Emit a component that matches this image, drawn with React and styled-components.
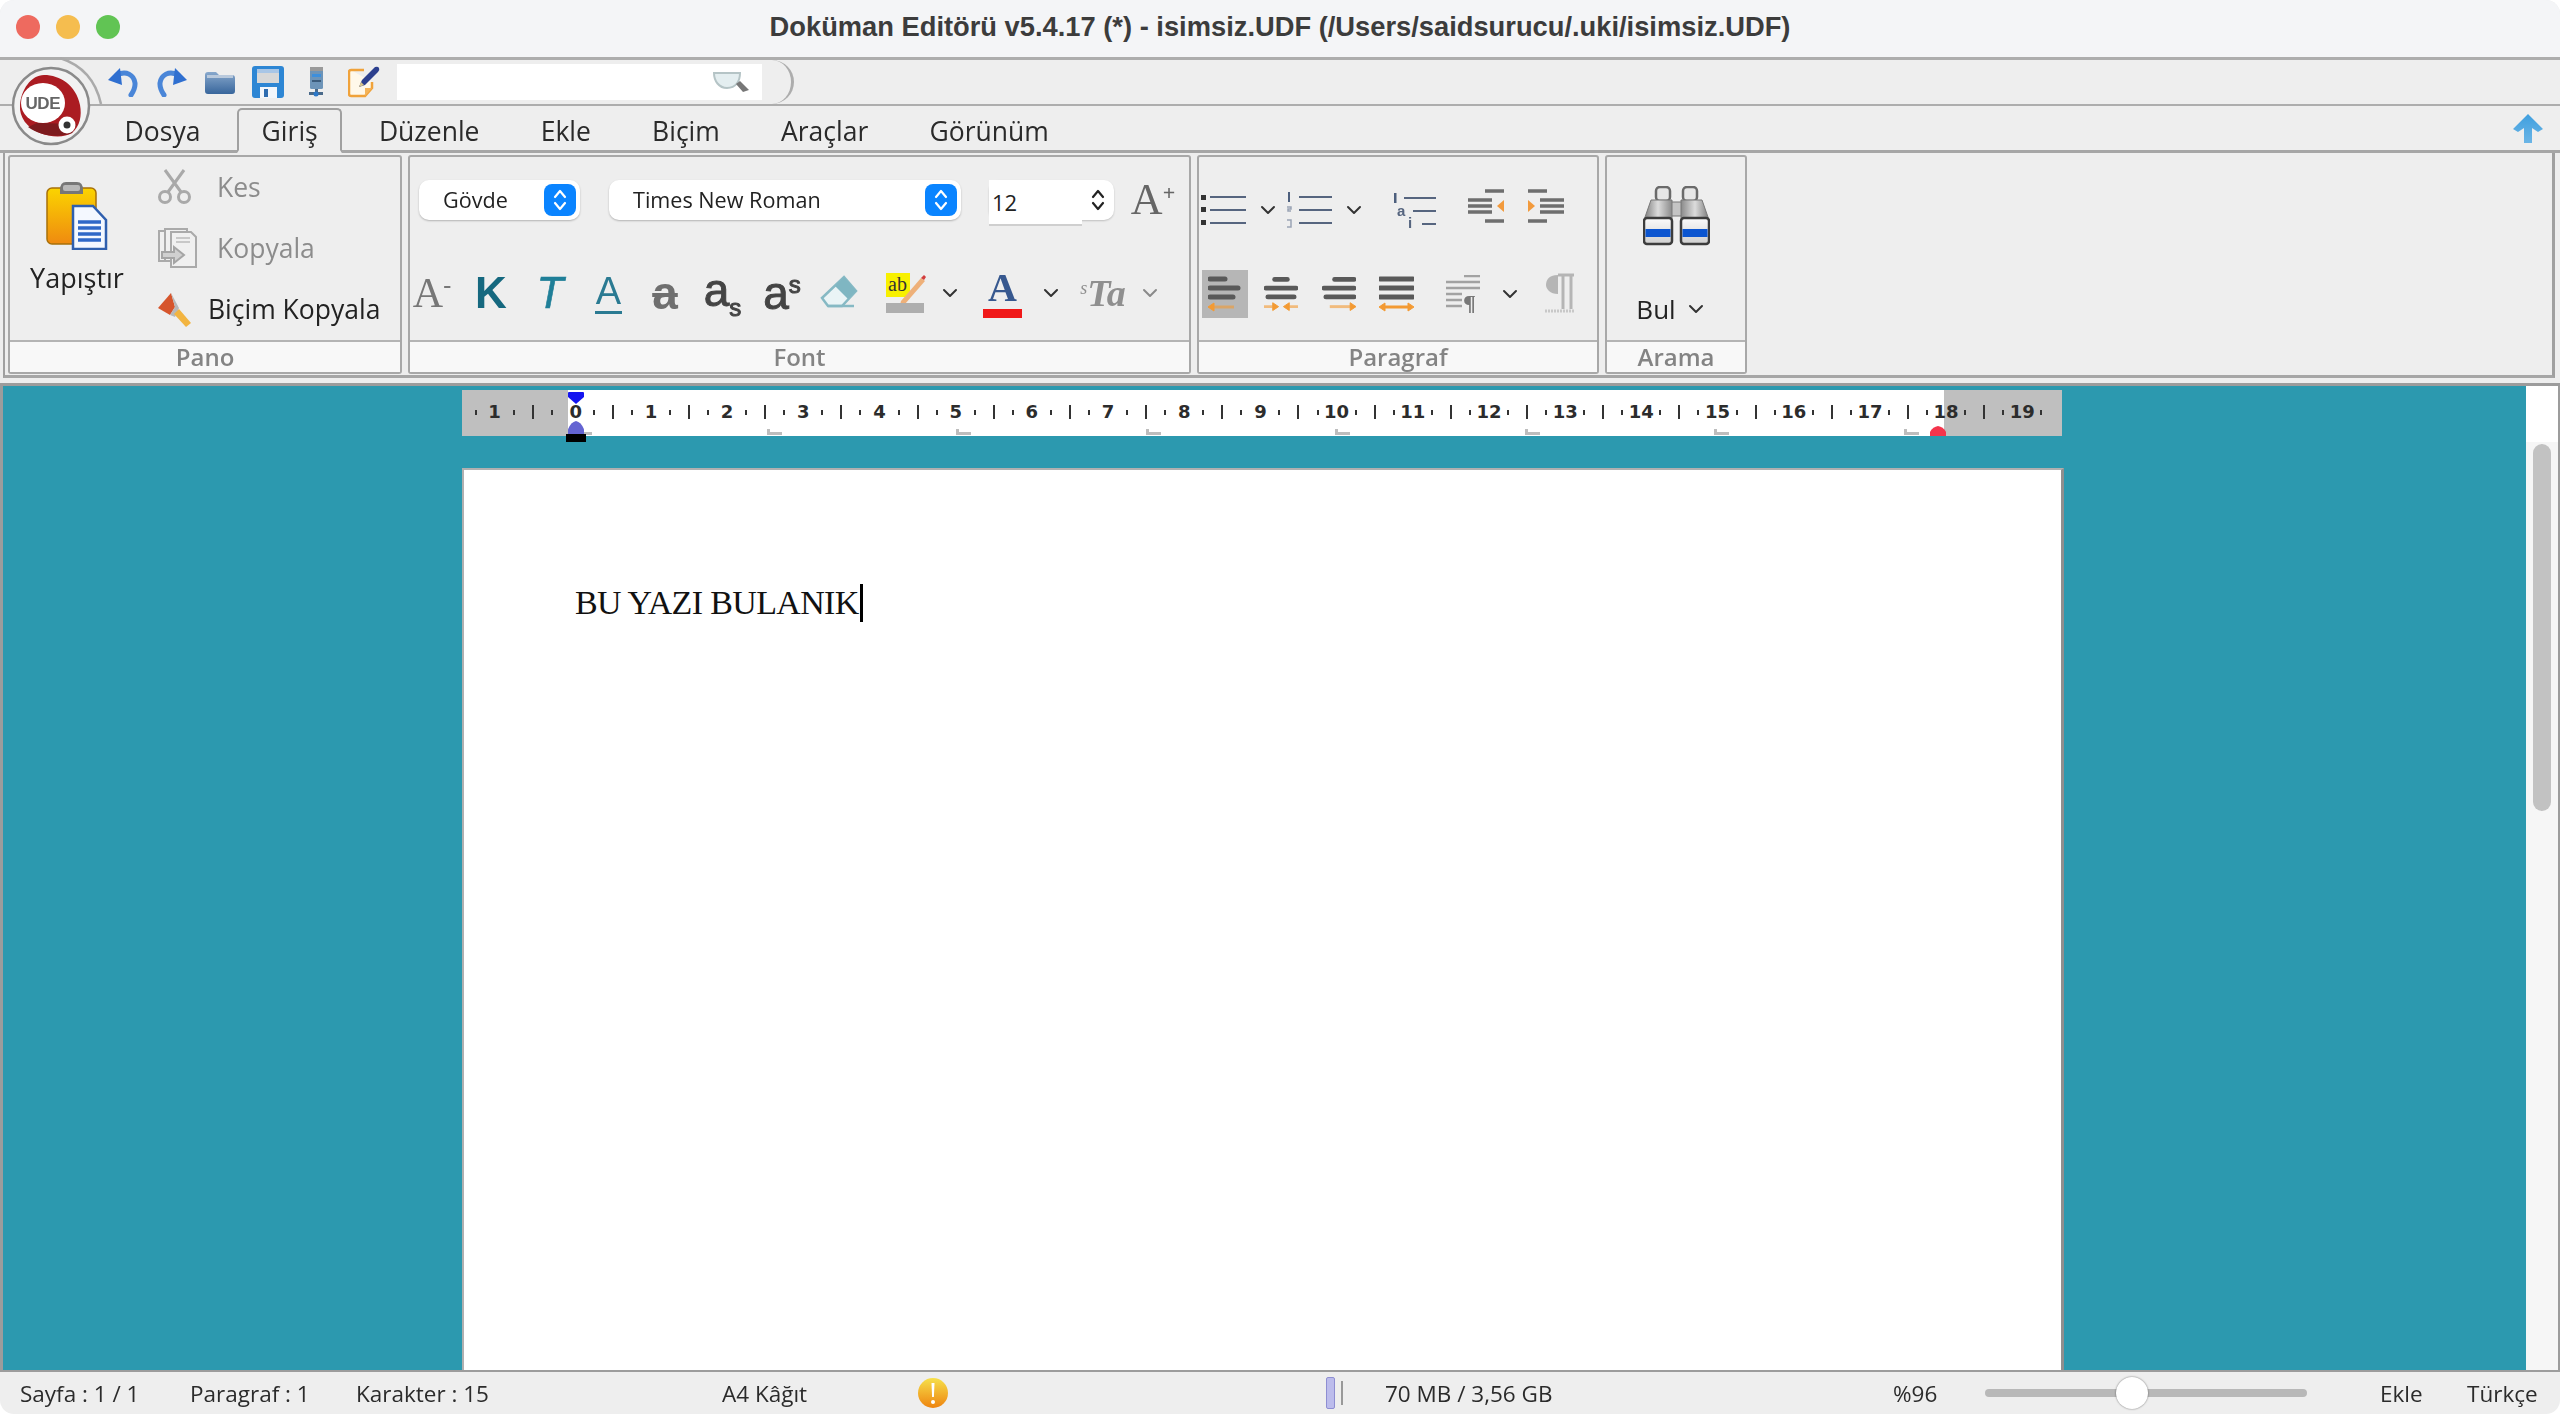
import React from 'react';
import styled, { createGlobalStyle } from 'styled-components';

const UI_FONT = '"Open Sans", "Liberation Sans", sans-serif';

const GlobalStyle = createGlobalStyle`
  html, body { margin: 0; padding: 0; background: #fff; }
  * { box-sizing: border-box; }
`;

/* ---------- icons ---------- */

const Chevron = ({ color = '#333' }) => (
  <svg width="16" height="10" viewBox="0 0 16 10">
    <path d="M2 2l6 6 6-6" fill="none" stroke={color} strokeWidth="2" strokeLinecap="round" strokeLinejoin="round" />
  </svg>
);

const UpDown = ({ color = '#fff', size = 24 }) => (
  <svg width="14" height={size} viewBox="0 0 14 24">
    <path d="M2 9l5-6 5 6M2 15l5 6 5-6" fill="none" stroke={color} strokeWidth="2.2" strokeLinecap="round" strokeLinejoin="round" />
  </svg>
);

const Logo = () => (
  <svg width="112" height="96" viewBox="0 0 112 96">
    <path d="M60 1C82 8 96 24 101 47" fill="none" stroke="#aaa" strokeWidth="2.5" />
    <circle cx="51" cy="49" r="38" fill="#f2f2f2" stroke="#8a8a8a" strokeWidth="2.5" />
    <path d="M44 18c16 0 32 10 36 30 2 11 0 21-8 28-8 5-22 4-32 0-13-5-21-16-20-28 1-15 11-30 24-30z" fill="#ab1c22" />
    <path d="M28 70c12 9 30 11 44 6l5-9-40-1z" fill="#7d1b1e" />
    <ellipse cx="43" cy="46" rx="22" ry="20" fill="#fff" />
    <text x="43" y="52" fontFamily='"Liberation Sans", sans-serif' fontSize="17" fontWeight="700" fill="#666" textAnchor="middle" textLength="35">UDE</text>
    <circle cx="67" cy="68" r="8.5" fill="#fff" />
    <circle cx="67" cy="68" r="3.5" fill="#333" />
  </svg>
);

const UndoIcon = ({ flip }) => (
  <svg width="30" height="30" viewBox="0 0 30 30" style={flip ? { transform: 'scaleX(-1)' } : undefined}>
    <path d="M9 8c9-5 17 0 18 8 .4 5-2 9-4 12" fill="none" stroke="#4a86d8" strokeWidth="5" strokeLinecap="round" />
    <path d="M0 13L12 1l2 17z" fill="#2f6fd0" />
  </svg>
);

const FolderIcon = () => (
  <svg width="32" height="26" viewBox="0 0 32 26">
    <defs>
      <linearGradient id="fold" x1="0" y1="0" x2="0" y2="1">
        <stop offset="0" stopColor="#88a8cc" />
        <stop offset="1" stopColor="#38669c" />
      </linearGradient>
    </defs>
    <path d="M1 6q0-3 3-3h8l3 3h13q3 0 3 3v13q0 3-3 3H4q-3 0-3-3z" fill="url(#fold)" />
    <path d="M3 6h26v3H3z" fill="#b9c9dc" />
  </svg>
);

const SaveIcon = () => (
  <svg width="32" height="32" viewBox="0 0 32 32">
    <rect x="0" y="0" width="32" height="32" rx="3" fill="#2d86d4" />
    <rect x="5" y="3" width="22" height="14" fill="#d8d8d8" />
    <rect x="5" y="3" width="22" height="4" fill="#a9c6e6" />
    <rect x="8" y="21" width="17" height="11" fill="#f2f6fb" />
    <rect x="12" y="23" width="4" height="8" fill="#2d6cb0" />
  </svg>
);

const ServerIcon = () => (
  <svg width="22" height="32" viewBox="0 0 22 32">
    <rect x="5" y="1" width="13" height="22" rx="1.5" fill="#6d94b8" />
    <rect x="5" y="1" width="13" height="4" fill="#9a9a9a" />
    <rect x="7" y="8" width="9" height="3" fill="#3d8fdc" />
    <rect x="7" y="14" width="9" height="2" fill="#3c5c7c" />
    <path d="M10 23h3v3h5v3H4v-3h6z" fill="#4a6a8a" />
    <circle cx="11" cy="28" r="2.5" fill="#2c78c8" />
  </svg>
);

const NoteIcon = () => (
  <svg width="32" height="32" viewBox="0 0 32 32">
    <path d="M3 4h13M3 4q-2 0-2 2v22q0 2 2 2h14l7-8v-6" fill="#fff8ea" stroke="#f0a23a" strokeWidth="2.5" />
    <path d="M17 30v-8h7z" fill="#f4b45a" />
    <path d="M11 21l3-7L27 1q3-1 4 1 1 2-1 4L17 19z" fill="#2c3f8e" />
    <path d="M11 21l2-5 3 3z" fill="#d8c58a" />
  </svg>
);

const SearchGlass = () => (
  <svg width="38" height="22" viewBox="0 0 38 22">
    <path d="M2 2h26c0 8-4 15-13 15C7 17 2 10 2 2z" fill="#e4eef0" stroke="#b5c4c6" strokeWidth="2" />
    <path d="M24 13l7 8 6-2-9-9z" fill="#777" />
  </svg>
);

const CollapseArrow = () => (
  <svg width="30" height="30" viewBox="0 0 30 30">
    <defs>
      <linearGradient id="collapse" x1="0" y1="0" x2="0" y2="1">
        <stop offset="0" stopColor="#3f9fdf" />
        <stop offset="1" stopColor="#6bb5e6" />
      </linearGradient>
    </defs>
    <path d="M15 0L30 15l-5 3-6-4v15h-8V14l-6 4-5-3z" fill="url(#collapse)" />
  </svg>
);

const PasteIcon = () => (
  <svg width="62" height="70" viewBox="0 0 62 70">
    <defs>
      <linearGradient id="board" x1="0" y1="0" x2="0" y2="1">
        <stop offset="0" stopColor="#fbd400" />
        <stop offset="1" stopColor="#ef8a10" />
      </linearGradient>
    </defs>
    <rect x="1" y="8" width="49" height="56" rx="5" fill="url(#board)" stroke="#a87008" strokeWidth="1.5" />
    <path d="M14 10q0-8 6-8h11q6 0 6 8v4H14z" fill="#777" />
    <rect x="17" y="5" width="17" height="6" rx="2" fill="#b8b8b8" />
    <path d="M27 26h20l13 14v29H27z" fill="#f4f8ff" stroke="#2f5fae" strokeWidth="2.5" />
    <path d="M32 42h23M32 48h23M32 54h23M32 60h23" stroke="#2f68c8" strokeWidth="3.5" />
  </svg>
);

const ScissorsIcon = () => (
  <svg width="35" height="35" viewBox="0 0 35 35" fill="none" stroke="#a9a9a9" strokeWidth="3">
    <path d="M8 1l16 22M27 1L11 23" />
    <circle cx="8" cy="28" r="5.5" />
    <circle cx="27" cy="28" r="5.5" />
  </svg>
);

const CopyIcon = () => (
  <svg width="42" height="40" viewBox="0 0 42 40" fill="#f0f0f0" stroke="#aaa" strokeWidth="2">
    <path d="M2 3h20v30H2z" />
    <path d="M8 1h22v32H8z" />
    <path d="M14 4h20l5 5v30H14z" />
    <path d="M19 10h14M19 14h14" stroke="#c8c8c8" />
    <path d="M5 24h12v-5l10 8-10 8v-5H5z" fill="#d0d0d0" stroke="#a5a5a5" />
  </svg>
);

const BrushIcon = () => (
  <svg width="35" height="35" viewBox="0 0 35 35">
    <path d="M14 1L1 16l12 7 5-8z" fill="#d6552c" />
    <path d="M14 1l4 14-5 8 5 2 4-9z" fill="#b8b8b8" />
    <path d="M17 22l5-5 12 14-5 4z" fill="#f2b440" />
  </svg>
);

const EraserIcon = () => (
  <svg width="38" height="36" viewBox="0 0 38 36">
    <path d="M24 2l12 14-14 15H8L2 23z" fill="#eaf4f6" stroke="#86b9c4" strokeWidth="2.5" />
    <path d="M24 2l12 14-8 8-13-13z" fill="#7fb6c2" />
    <path d="M8 31h26" stroke="#86b9c4" strokeWidth="2.5" />
  </svg>
);

const HighlightIcon = () => (
  <svg width="40" height="40" viewBox="0 0 40 40">
    <rect x="0" y="0" width="24" height="24" fill="#f8f000" />
    <text x="2" y="18" fontFamily='"Liberation Serif", serif' fontSize="20" fill="#333">ab</text>
    <path d="M15 28L35 5l4 3-20 23-5 1z" fill="#eeb079" />
    <path d="M35 5l3-3 2 2-2 3z" fill="#d23d3d" />
    <rect x="0" y="30" width="38" height="10" fill="#aeaeae" />
  </svg>
);

const ListIcon = ({ kind }) => (
  <svg width="45" height="36" viewBox="0 0 45 36">
    <g fill="#333">
      {kind === 'bullet' && (
        <>
          <rect x="0" y="3" width="5" height="5" />
          <rect x="0" y="15" width="5" height="5" />
          <rect x="0" y="28" width="5" height="5" />
        </>
      )}
      {kind === 'number' && (
        <>
          <rect x="1" y="0" width="2" height="10" fill="#4d5f7d" />
          <path d="M0 15h4v2H1v2h3M0 28h4v7H0" fill="none" stroke="#9aa4b5" strokeWidth="1.5" />
        </>
      )}
    </g>
    <path d={`M${kind === 'bullet' ? 9 : 12} 5H45M${kind === 'bullet' ? 9 : 12} 18H45M${kind === 'bullet' ? 9 : 12} 31H45`} stroke="#56657f" strokeWidth="2.2" />
  </svg>
);

const MultilevelIcon = () => (
  <svg width="42" height="38" viewBox="0 0 42 38">
    <rect x="0" y="2" width="2.5" height="10" fill="#4d5f7d" />
    <path d="M10 7h32M19 20h23M28 33h14" stroke="#56657f" strokeWidth="2.2" />
    <text x="3" y="25" fontFamily='"Liberation Sans", sans-serif' fontSize="15" fontWeight="700" fill="#56657f">a</text>
    <text x="14" y="37" fontFamily='"Liberation Sans", sans-serif' fontSize="15" fontWeight="700" fill="#56657f">i</text>
  </svg>
);

const IndentIcon = ({ flip }) => (
  <svg width="38" height="34" viewBox="0 0 38 34" style={flip ? { transform: 'scaleX(-1)' } : undefined}>
    <path d="M17 2h19M0 11h24M0 17h24M0 23h24M17 32h19" stroke="#6e6e6e" strokeWidth="3.5" />
    <path d="M36 11v12l-7-6z" fill="#f29a3c" />
  </svg>
);

const ALIGN_LINES = {
  left: [[2, 17], [2, 30], [2, 25]],
  center: [[11, 24], [2, 33], [4, 31]],
  right: [[13, 33], [2, 33], [4, 33]],
  justify: [[1, 34], [1, 34], [1, 34]],
};

const AlignIcon = ({ mode }) => (
  <svg width="35" height="36" viewBox="0 0 35 36">
    {ALIGN_LINES[mode].map(([x1, x2], i) => (
      <line key={i} x1={x1} x2={x2} y1={3 + i * 9} y2={3 + i * 9} stroke="#595959" strokeWidth="5" strokeLinecap="round" />
    ))}
    <g fill="#f39a33" stroke="#f39a33">
      {(mode === 'left' || mode === 'justify') && <path d="M0 31l6-4v8z" />}
      {(mode === 'right' || mode === 'justify') && <path d="M35 31l-6-4v8z" />}
      {mode === 'center' && <path d="M15 31l-6-4v8zM20 31l6-4v8z" />}
      {mode === 'center' && <path d="M0 31h9M26 31h9" strokeWidth="3" opacity=".6" />}
      {mode === 'left' && <path d="M4 31h22" strokeWidth="3" opacity=".6" />}
      {mode === 'right' && <path d="M8 31h22" strokeWidth="3" opacity=".6" />}
      {mode === 'justify' && <path d="M4 31h28" strokeWidth="3" />}
    </g>
  </svg>
);

const ParagraphMarkIcon = () => (
  <svg width="34" height="38" viewBox="0 0 34 38">
    <path d="M18 1h16M0 7h34M0 13h34M0 19h16M0 25h16M0 31h16" stroke="#a2a2a2" strokeWidth="2.6" />
    <text x="17" y="36" fontFamily='"Liberation Serif", serif' fontSize="24" fontWeight="700" fill="#777">¶</text>
  </svg>
);

const RtlIcon = () => (
  <svg width="31" height="42" viewBox="0 0 31 42">
    <path d="M14 2h16M19 2v34M27 2v34" stroke="#b5b5b5" strokeWidth="3" fill="none" />
    <path d="M14 2C4 2 2 8 2 12s4 9 12 9z" fill="#b5b5b5" />
    <path d="M1 38h30" stroke="#c8c8c8" strokeWidth="3" strokeDasharray="2 1" />
  </svg>
);

const BinocularsBarrel = () => (
  <g>
    <rect x="13" y="1" width="14" height="14" rx="4" fill="#e6e6e6" stroke="#6a6a6a" strokeWidth="2.5" />
    <path d="M8 14h21v20H1z" fill="url(#barrel)" stroke="#777" />
    <rect x="1" y="32" width="28" height="26" rx="3" fill="url(#lens)" stroke="#3c3c3c" strokeWidth="2.5" />
    <rect x="2.5" y="43" width="25" height="8" fill="#0b55d0" />
  </g>
);

const BinocularsIcon = () => (
  <svg width="67" height="60" viewBox="0 0 67 60">
    <defs>
      <linearGradient id="barrel" x1="0" y1="0" x2="1" y2="0">
        <stop offset="0" stopColor="#7a7a7a" />
        <stop offset=".5" stopColor="#dcdcdc" />
        <stop offset="1" stopColor="#8a8a8a" />
      </linearGradient>
      <linearGradient id="lens" x1="0" y1="0" x2="0" y2="1">
        <stop offset="0" stopColor="#fbfbfb" />
        <stop offset="1" stopColor="#cfcfcf" />
      </linearGradient>
    </defs>
    <rect x="28" y="16" width="11" height="14" fill="#c4c4c4" stroke="#777" />
    <BinocularsBarrel />
    <g transform="matrix(-1 0 0 1 67 0)"><BinocularsBarrel /></g>
  </svg>
);

const WarningIcon = () => (
  <svg width="30" height="32" viewBox="0 0 30 32">
    <defs>
      <linearGradient id="warn" x1="0" y1="0" x2="0" y2="1">
        <stop offset="0" stopColor="#f6e04a" />
        <stop offset="1" stopColor="#ee8410" />
      </linearGradient>
    </defs>
    <ellipse cx="15" cy="16" rx="15" ry="15" fill="url(#warn)" />
    <path d="M13.5 6h3l-.6 14h-1.8z" fill="#fff" />
    <circle cx="15" cy="25" r="2" fill="#fff" />
  </svg>
);

const Pentagon = ({ color, down, width = 16, height = 12 }) => (
  <svg width={width} height={height} viewBox="0 0 16 12" preserveAspectRatio="none">
    <path d={down ? 'M1 0h14q1 0 1 1v4l-8 7-8-7V1q0-1 1-1z' : 'M8 0q5 1 8 7v5H0V7q3-6 8-7z'} fill={color} />
  </svg>
);

const TabStop = styled.i`
  display: block;
  width: 15px;
  height: 6px;
  border-left: 3px solid #bdbdbd;
  border-bottom: 3px solid #bdbdbd;
`;

/* ---------- window ---------- */

const Window = styled.div`
  width: 2560px;
  height: 1414px;
  display: flex;
  flex-direction: column;
  background: #eeeeee;
  border-radius: 14px;
  overflow: hidden;
  font-family: ${UI_FONT};
  color: #222;
  filter: blur(0.55px);
`;

const TitleBar = styled.div`
  height: 60px;
  flex: none;
  display: grid;
  grid-template-columns: 1fr auto 1fr;
  align-items: center;
  padding: 0 16px 4px;
  background: #f4f5f7;
  border-bottom: 3px solid #adadad;
`;

const Lights = styled.div`
  display: flex;
  gap: 16px;
`;

const Light = styled.span`
  width: 24px;
  height: 24px;
  border-radius: 50%;
  background: ${(p) => p.$color};
`;

const Title = styled.div`
  font-family: "Liberation Sans", sans-serif;
  font-size: 27.3px;
  font-weight: 700;
  color: #3c3c3c;
`;

const QuickRow = styled.div`
  height: 46px;
  flex: none;
  display: flex;
  border-bottom: 2px solid #adadad;
`;

const QuickPill = styled.div`
  width: 794px;
  display: flex;
  align-items: center;
  padding-left: 108px;
  border-right: 3px solid #adadad;
  border-radius: 0 30px 30px 0;
`;

const QuickSlot = styled.div`
  display: flex;
  justify-content: center;
  width: ${(p) => p.$w}px;
  margin-left: ${(p) => p.$ml || 0}px;
`;

const SearchField = styled.div`
  width: 365px;
  height: 36px;
  margin-left: 17px;
  padding-right: 12px;
  display: flex;
  align-items: center;
  justify-content: flex-end;
  background: #fff;
`;

const LogoSpot = styled.div`
  position: absolute;
  left: 0;
  top: 57px;
`;

const TabRow = styled.div`
  height: 47px;
  flex: none;
  display: flex;
  align-items: flex-end;
  gap: 12px;
  padding: 0 17px 0 100px;
  border-bottom: 3px solid #a6a6a6;
`;

const Tab = styled.div`
  height: 45px;
  margin-bottom: -3px;
  padding: 2px 22.6px 0;
  font-size: 26.5px;
  line-height: 38px;
  color: #2a2a2a;
  white-space: nowrap;
  border: 2px solid ${(p) => (p.$active ? '#a0a0a0' : 'transparent')};
  border-bottom: 3px solid ${(p) => (p.$active ? '#eeeeee' : 'transparent')};
  border-radius: 5px 5px 0 0;
`;

const Collapse = styled.div`
  margin: 0 0 6px auto;
  height: 30px;
`;

/* ---------- ribbon ---------- */

const Ribbon = styled.div`
  height: 225px;
  flex: none;
  display: flex;
  align-items: stretch;
  gap: 6px;
  margin: 0 5px 0 3px;
  padding: 2px 0 1px 3px;
  border-left: 2px solid #a0a0a0;
  border-right: 3px solid #a0a0a0;
  border-bottom: 3px solid #a6a6a6;
`;

const Group = styled.section`
  width: ${(p) => p.$w}px;
  display: flex;
  flex-direction: column;
  border: 2px solid #a8a8a8;
  border-radius: 3px;
`;

const GroupBody = styled.div`
  flex: 1;
  min-height: 0;
  display: ${(p) => (p.$row ? 'flex' : 'block')};
  padding: ${(p) => p.$pad || 0};
`;

const GroupLabel = styled.div`
  height: 32px;
  flex: none;
  text-align: center;
  font-size: 24px;
  line-height: 29px;
  font-weight: 600;
  color: #848484;
  background: #f8f8f8;
  border-top: 2px solid #b4b4b4;
`;

const PasteButton = styled.div`
  width: 134px;
  display: flex;
  flex-direction: column;
  align-items: center;
  padding-top: 23px;
`;

const PasteLabel = styled.div`
  margin-top: 13px;
  font-size: 27px;
  line-height: 30px;
`;

const ClipList = styled.div`
  margin-left: 11px;
  margin-top: -1px;
  display: flex;
  flex-direction: column;
`;

const ClipRow = styled.div`
  height: 62px;
  display: flex;
  align-items: center;
  font-size: 26.5px;
  white-space: nowrap;
  color: ${(p) => (p.$off ? '#8c8c8c' : '#222')};
`;

const ClipIcon = styled.div`
  width: ${(p) => p.$w}px;
  flex: none;
  display: flex;
  padding-left: 2px;
`;

const ToolRow = styled.div`
  display: flex;
  align-items: center;
  height: ${(p) => p.$h}px;
  margin-top: ${(p) => p.$mt || 0}px;
`;

const Tool = styled.div`
  width: ${(p) => p.$w}px;
  margin-left: ${(p) => p.$ml || 0}px;
  margin-top: ${(p) => (p.$up ? -p.$up : 0)}px;
  height: ${(p) => p.$h || 48}px;
  flex: none;
  display: flex;
  align-items: center;
  justify-content: center;
  background: ${(p) => (p.$on ? '#b6b6b6' : 'transparent')};
`;

const SelectBox = styled.div`
  width: ${(p) => p.$w}px;
  margin-left: ${(p) => p.$ml || 0}px;
  height: 40px;
  flex: none;
  display: flex;
  align-items: center;
  justify-content: space-between;
  padding: 0 4px 0 24px;
  font-size: 21.6px;
  line-height: 28px;
  color: #222;
  background: #fff;
  border-radius: 10px;
  box-shadow: 0 1px 2px rgba(0, 0, 0, 0.25);
`;

const SelectButton = styled.div`
  width: 32px;
  height: 32px;
  display: flex;
  align-items: center;
  justify-content: center;
  background: #0a84ff;
  border-radius: 8px;
`;

const Spinner = styled.div`
  width: 125px;
  height: 40px;
  margin-left: 28px;
  flex: none;
  display: flex;
  justify-content: space-between;
  background: #fff;
  border-radius: 10px;
  box-shadow: 0 1px 2px rgba(0, 0, 0, 0.2);
`;

const SpinnerField = styled.div`
  width: 93px;
  height: 46px;
  padding-left: 3px;
  font-size: 22px;
  line-height: 44px;
  background: #fff;
  border-bottom: 2px solid #cfcfcf;
`;

const SpinnerArrows = styled.div`
  width: 32px;
  display: flex;
  align-items: center;
  justify-content: center;
`;

const Glyph = styled.span`
  position: relative;
  display: inline-block;
  font-family: ${(p) => (p.$serif ? '"Liberation Serif", serif' : '"Liberation Sans", sans-serif')};
  font-size: ${(p) => p.$size}px;
  font-weight: ${(p) => p.$weight || 400};
  font-style: ${(p) => (p.$italic ? 'italic' : 'normal')};
  color: ${(p) => p.$color};
  line-height: 1;
  white-space: nowrap;
  text-decoration: ${(p) => (p.$strike ? 'line-through' : 'none')};
  -webkit-text-stroke: ${(p) => p.$stroke || 0}px ${(p) => p.$color};
`;

const GlyphMark = styled.span`
  font-size: ${(p) => p.$size}px;
  font-weight: ${(p) => p.$weight || 400};
  vertical-align: ${(p) => p.$raise}px;
`;

const UnderBar = styled.div`
  width: ${(p) => p.$w}px;
  height: ${(p) => p.$h}px;
  margin-top: 1px;
  background: ${(p) => p.$color};
`;

const GlyphStack = styled.div`
  display: flex;
  flex-direction: column;
  align-items: center;
`;

const FindBody = styled.div`
  flex: 1;
  display: flex;
  flex-direction: column;
  align-items: center;
  padding-top: 29px;
`;

const FindRow = styled.div`
  display: flex;
  align-items: center;
  gap: 12px;
  margin: 44px 0 0 -12px;
  height: 38px;
  font-size: 26px;
`;

/* ---------- document ---------- */

const DocArea = styled.div`
  flex: 1;
  min-height: 0;
  display: flex;
  margin-top: 5px;
  border: 3px solid #9c9c9c;
  border-bottom-width: 2px;
  border-right-width: 2px;
`;

const Canvas = styled.div`
  flex: 1;
  min-width: 0;
  overflow: hidden;
  display: flex;
  flex-direction: column;
  padding: 4px 0 0 459px;
  background: #2c99af;
`;

const Ruler = styled.div`
  position: relative;
  width: 1600px;
  height: 46px;
  flex: none;
  background: linear-gradient(to right, #bfbfbf 106px, #fff 106px, #fff 1482px, #bfbfbf 1482px);
`;

const TickRow = styled.div`
  height: 39px;
  padding: 5px 0 0 4px;
  display: flex;
  align-items: center;
`;

const TickCell = styled.div`
  width: ${(p) => p.$w}px;
  padding-left: ${(p) => p.$shift || 0}px;
  flex: none;
  display: flex;
  align-items: center;
  justify-content: center;
  font-family: "DejaVu Sans", sans-serif;
  font-size: 18px;
  line-height: 24px;
  font-weight: 700;
  color: #2c2c2c;
`;

const Tick = styled.i`
  display: block;
  width: 2px;
  height: ${(p) => (p.$long ? 14 : 5)}px;
  background: #333;
`;

const StopRow = styled.div`
  display: flex;
  gap: 174.5px;
  padding-left: 115px;
`;

const RulerMark = styled.div`
  position: absolute;
  left: ${(p) => p.$left}px;
  top: ${(p) => p.$top}px;
  display: flex;
`;

const MarginBlock = styled.i`
  display: block;
  width: 20px;
  height: 8px;
  background: #000;
`;

const Page = styled.div`
  width: 1602px;
  flex: 1;
  margin-top: 32px;
  padding: 113px 0 0 111px;
  background: #fff;
  border: 2px solid #b0b0b0;
  border-right: 3px solid #8f8f8f;
  border-bottom: none;
`;

const PageLine = styled.div`
  display: flex;
  align-items: center;
  font-family: "Liberation Serif", serif;
  font-size: 34px;
  letter-spacing: -0.65px;
  line-height: 40px;
  color: #111;
`;

const Caret = styled.span`
  width: 3px;
  height: 38px;
  background: #000;
  margin-left: 1px;
`;

const ScrollCol = styled.div`
  width: 32px;
  flex: none;
  padding-top: 56px;
  background: #fff;
`;

const ScrollTrack = styled.div`
  height: 100%;
  padding: 2px 7px 0;
  background: #f6f6f6;
`;

const ScrollThumb = styled.div`
  height: 367px;
  border-radius: 9px;
  background: #c2c2c2;
`;

/* ---------- status ---------- */

const StatusBar = styled.div`
  height: 42px;
  flex: none;
  display: flex;
  align-items: center;
  padding-left: 20px;
  font-size: 22.5px;
  color: #2b2b2b;
`;

const StatusItem = styled.div`
  width: ${(p) => p.$w}px;
  flex: none;
  display: flex;
  align-items: center;
  white-space: nowrap;
`;

const MemoryBar = styled.i`
  width: 9px;
  height: 32px;
  background: #bcbcec;
  border: 1px solid #8e8ed2;
  border-radius: 2px;
`;

const MemoryTick = styled.i`
  width: 2px;
  height: 24px;
  margin-left: 6px;
  background: #999;
`;

const Slider = styled.div`
  position: relative;
  width: 322px;
  height: 8px;
  background: #b8b8b8;
  border-radius: 4px;
`;

const SliderThumb = styled.div`
  position: absolute;
  left: 131px;
  top: -12px;
  width: 32px;
  height: 32px;
  background: #fff;
  border-radius: 50%;
  box-shadow: 0 0 2px rgba(0, 0, 0, 0.55);
`;

const Root = styled.div`
  position: relative;
  width: 2560px;
`;

/* ---------- data ---------- */

const TABS = ['Dosya', 'Giriş', 'Düzenle', 'Ekle', 'Biçim', 'Araçlar', 'Görünüm'];

// quarter-centimetre marks, n = 0 is the left margin
const RULER_MARKS = [];
for (let n = -5; n <= 77; n++) RULER_MARKS.push(n);

const rulerCell = (n) => {
  if (n % 4 === 0) return Math.abs(n / 4);
  return <Tick $long={Math.abs(n % 4) === 2} />;
};

const FONT_TOOLS = [
  { w: 30, node: <Glyph $serif $size={42} $color="#777">A<GlyphMark $size={24} $weight={700} $raise={14}>-</GlyphMark></Glyph> },
  { ml: 28, w: 32, node: <Glyph $size={44} $weight={700} $color="#15687f">K</Glyph> },
  { ml: 28, w: 30, node: <Glyph $size={44} $italic $stroke={0.6} $color="#1f7f98">T</Glyph> },
  {
    ml: 30, w: 27,
    node: (
      <GlyphStack>
        <Glyph $size={38} $color="#2a7a92">A</Glyph>
        <UnderBar $w={27} $h={3} $color="#2a7a92" />
      </GlyphStack>
    ),
  },
  { ml: 28, w: 30, node: <Glyph $size={46} $weight={700} $strike $color="#6f6f6f">a</Glyph> },
  { ml: 23, w: 39, node: <Glyph $size={46} $stroke={1} $color="#444">a<GlyphMark $size={24} $raise={-10}>s</GlyphMark></Glyph> },
  { ml: 20, w: 40, node: <Glyph $size={46} $stroke={1} $color="#444">a<GlyphMark $size={24} $raise={16}>s</GlyphMark></Glyph> },
  { ml: 18, w: 38, node: <EraserIcon /> },
  { ml: 28, w: 40, node: <HighlightIcon /> },
  { ml: 16, w: 16, node: <Chevron /> },
  {
    ml: 25, w: 39,
    node: (
      <GlyphStack>
        <Glyph $serif $size={40} $weight={700} $color="#37588f">A</Glyph>
        <UnderBar $w={39} $h={9} $color="#f01818" />
      </GlyphStack>
    ),
  },
  { ml: 21, w: 16, node: <Chevron /> },
  {
    ml: 26, w: 36,
    node: <Glyph $serif $size={38} $weight={700} $italic $color="#8f8f8f"><GlyphMark $size={18} $raise={12}>s</GlyphMark>Ta</Glyph>,
  },
  { ml: 21, w: 16, node: <Chevron color="#8a8a8a" /> },
];

const PARA_TOP = [
  { ml: 2, w: 45, node: <ListIcon kind="bullet" /> },
  { ml: 14, w: 16, node: <Chevron /> },
  { ml: 10, w: 47, node: <ListIcon kind="number" /> },
  { ml: 13, w: 16, node: <Chevron /> },
  { ml: 32, w: 42, node: <MultilevelIcon /> },
  { ml: 32, w: 38, up: 8, node: <IndentIcon /> },
  { ml: 20, w: 38, up: 8, node: <IndentIcon flip /> },
];

const PARA_BOTTOM = [
  { ml: 3, w: 46, on: true, node: <AlignIcon mode="left" /> },
  { ml: 16, w: 34, node: <AlignIcon mode="center" /> },
  { ml: 24, w: 34, node: <AlignIcon mode="right" /> },
  { ml: 23, w: 35, node: <AlignIcon mode="justify" /> },
  { ml: 32, w: 34, node: <ParagraphMarkIcon /> },
  { ml: 22, w: 16, node: <Chevron /> },
  { ml: 26, w: 31, node: <RtlIcon /> },
];

const renderTools = (tools, h) =>
  tools.map((t, i) => (
    <Tool key={i} $w={t.w} $ml={t.ml} $h={h} $on={t.on} $up={t.up}>
      {t.node}
    </Tool>
  ));

export default function App() {
  return (
    <Root>
      <GlobalStyle />
      <Window>
        <TitleBar>
          <Lights>
            <Light $color="#ee6a5f" />
            <Light $color="#f5bd4f" />
            <Light $color="#61c454" />
          </Lights>
          <Title>Doküman Editörü v5.4.17 (*) - isimsiz.UDF (/Users/saidsurucu/.uki/isimsiz.UDF)</Title>
        </TitleBar>

        <QuickRow>
          <QuickPill>
            <QuickSlot $w={30}><UndoIcon /></QuickSlot>
            <QuickSlot $w={30} $ml={19}><UndoIcon flip /></QuickSlot>
            <QuickSlot $w={32} $ml={17}><FolderIcon /></QuickSlot>
            <QuickSlot $w={32} $ml={16}><SaveIcon /></QuickSlot>
            <QuickSlot $w={22} $ml={21}><ServerIcon /></QuickSlot>
            <QuickSlot $w={32} $ml={21}><NoteIcon /></QuickSlot>
            <SearchField><SearchGlass /></SearchField>
          </QuickPill>
        </QuickRow>

        <TabRow>
          {TABS.map((t) => (
            <Tab key={t} $active={t === 'Giriş'}>{t}</Tab>
          ))}
          <Collapse><CollapseArrow /></Collapse>
        </TabRow>

        <Ribbon>
          <Group $w={394}>
            <GroupBody $row>
              <PasteButton>
                <PasteIcon />
                <PasteLabel>Yapıştır</PasteLabel>
              </PasteButton>
              <ClipList>
                <ClipRow $off><ClipIcon $w={62}><ScissorsIcon /></ClipIcon>Kes</ClipRow>
                <ClipRow $off><ClipIcon $w={62}><CopyIcon /></ClipIcon>Kopyala</ClipRow>
                <ClipRow><ClipIcon $w={53}><BrushIcon /></ClipIcon>Biçim Kopyala</ClipRow>
              </ClipList>
            </GroupBody>
            <GroupLabel>Pano</GroupLabel>
          </Group>

          <Group $w={783}>
            <GroupBody $pad="23px 0 0 7px">
              <ToolRow $h={40}>
                <SelectBox $w={161} $ml={2}>
                  Gövde
                  <SelectButton><UpDown /></SelectButton>
                </SelectBox>
                <SelectBox $w={352} $ml={29}>
                  Times New Roman
                  <SelectButton><UpDown /></SelectButton>
                </SelectBox>
                <Spinner>
                  <SpinnerField>12</SpinnerField>
                  <SpinnerArrows><UpDown color="#222" /></SpinnerArrows>
                </Spinner>
                <Tool $w={38} $ml={20}>
                  <Glyph $serif $size={44} $color="#666">A<GlyphMark $size={22} $weight={700} $raise={14}>+</GlyphMark></Glyph>
                </Tool>
              </ToolRow>
              <ToolRow $h={60} $mt={43}>{renderTools(FONT_TOOLS)}</ToolRow>
            </GroupBody>
            <GroupLabel>Font</GroupLabel>
          </Group>

          <Group $w={402}>
            <GroupBody $pad="33px 0 0 0">
              <ToolRow $h={40}>{renderTools(PARA_TOP, 40)}</ToolRow>
              <ToolRow $h={48} $mt={40}>{renderTools(PARA_BOTTOM, 48)}</ToolRow>
            </GroupBody>
            <GroupLabel>Paragraf</GroupLabel>
          </Group>

          <Group $w={142}>
            <FindBody>
              <BinocularsIcon />
              <FindRow>Bul <Chevron /></FindRow>
            </FindBody>
            <GroupLabel>Arama</GroupLabel>
          </Group>
        </Ribbon>

        <DocArea>
          <Canvas>
            <Ruler>
              <TickRow>
                {RULER_MARKS.map((n) => (
                  <TickCell key={n} $w={n === 0 ? 23 : 19.05} $shift={n === 0 ? 6 : 0}>{rulerCell(n)}</TickCell>
                ))}
              </TickRow>
              <StopRow>
                {[0, 1, 2, 3, 4, 5, 6, 7].map((i) => <TabStop key={i} />)}
              </StopRow>
              <RulerMark $left={106} $top={2}><Pentagon color="#1414f0" down /></RulerMark>
              <RulerMark $left={106} $top={31}><Pentagon color="#6464d2" height={14} /></RulerMark>
              <RulerMark $left={104} $top={44}><MarginBlock /></RulerMark>
              <RulerMark $left={1468} $top={36}><Pentagon color="#f4344c" height={10} /></RulerMark>
            </Ruler>
            <Page>
              <PageLine>BU YAZI BULANIK<Caret /></PageLine>
            </Page>
          </Canvas>
          <ScrollCol>
            <ScrollTrack><ScrollThumb /></ScrollTrack>
          </ScrollCol>
        </DocArea>

        <StatusBar>
          <StatusItem $w={170}>Sayfa : 1 / 1</StatusItem>
          <StatusItem $w={166}>Paragraf : 1</StatusItem>
          <StatusItem $w={366}>Karakter : 15</StatusItem>
          <StatusItem $w={196}>A4 Kâğıt</StatusItem>
          <StatusItem $w={408}><WarningIcon /></StatusItem>
          <StatusItem $w={59}><MemoryBar /><MemoryTick /></StatusItem>
          <StatusItem $w={508}>70 MB / 3,56 GB</StatusItem>
          <StatusItem $w={92}>%96</StatusItem>
          <StatusItem $w={395}><Slider><SliderThumb /></Slider></StatusItem>
          <StatusItem $w={87}>Ekle</StatusItem>
          <StatusItem $w={80}>Türkçe</StatusItem>
        </StatusBar>
      </Window>
      <LogoSpot><Logo /></LogoSpot>
    </Root>
  );
}
